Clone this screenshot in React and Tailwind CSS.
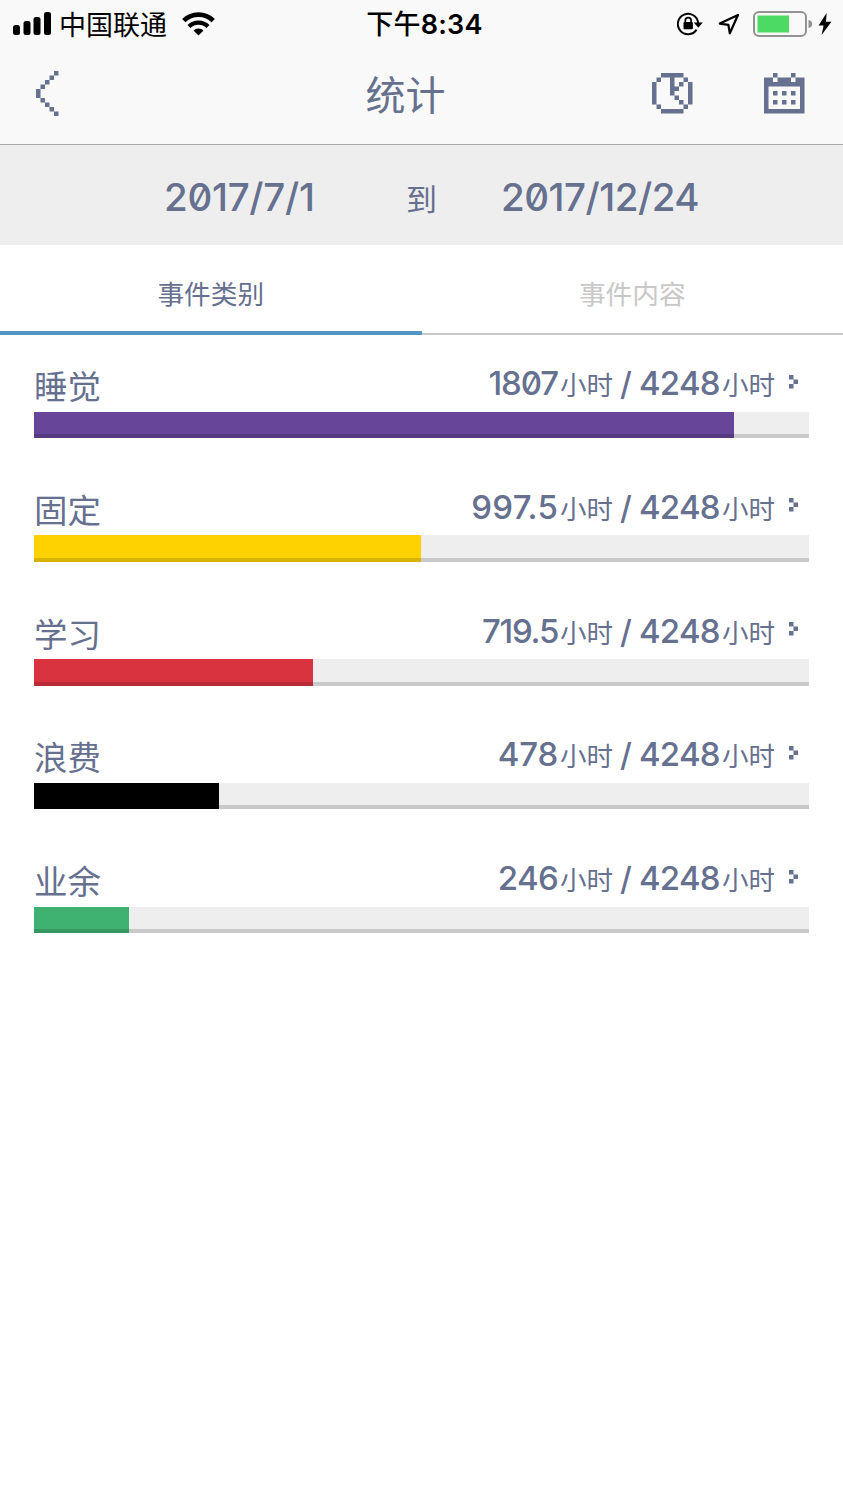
import React from "react";

const categories = [
  { name: "睡觉", hours: 1807, bar: "bg-[#674598] border-[#573b81]", tracking: "tracking-[-1.1px]" },
  { name: "固定", hours: 997.5, bar: "bg-[#fed100] border-[#d8b200]", tracking: "tracking-[0.2px]" },
  { name: "学习", hours: 719.5, bar: "bg-[#da3340] border-[#b92b36]", tracking: "tracking-[-1.3px]" },
  { name: "浪费", hours: 478, bar: "bg-black border-black", tracking: "tracking-[-0.2px]" },
  { name: "业余", hours: 246, bar: "bg-[#3fb271] border-[#369760]", tracking: "tracking-[-0.7px]" },
];

const totalHours = 4248;
const barMax = 2000;

// Pixel icons, one "#" per 4.5px cell
const backIcon = [
  "....#",
  "...#.",
  "..#..",
  ".#...",
  "#....",
  "#....",
  ".#...",
  "..#..",
  "...#.",
  "....#",
];

const clockIcon = [
  "..#####..",
  ".#..#..#.",
  "#...#.#.#",
  "#...##..#",
  "#...#...#",
  "#....#..#",
  "#.....#.#",
  ".#.....#.",
  "..#####..",
];

const calendarIcon = [
  "..#...#..",
  "##.###.##",
  "#########",
  "#.......#",
  "#.#.#.#.#",
  "#.......#",
  "#.#.#.#.#",
  "#.......#",
  "#########",
];

const arrowIcon = ["#.", ".#", "#."];

const PixelIcon = ({ rows, className }) => {
  const d = rows
    .map((row, y) =>
      [...row].map((cell, x) => (cell === "#" ? `M${x} ${y}h1v1h-1z` : "")).join("")
    )
    .join("");
  return (
    <svg
      className={className}
      width={rows[0].length * 4.5}
      height={rows.length * 4.5}
      viewBox={`0 0 ${rows[0].length} ${rows.length}`}
      fill="currentColor"
      overflow="visible"
    >
      <path d={d} />
    </svg>
  );
};

const StatusBar = () => (
  <div className="grid grid-cols-[1fr_auto_1fr] items-center h-[46px] pl-[13px] pr-[11px] text-black">
    <div className="flex items-center">
      <svg width="38" height="24" viewBox="0 0 38 24" fill="currentColor">
        <rect x="0" y="13" width="7" height="10" rx="2.5" />
        <rect x="10.5" y="9" width="7" height="14" rx="2.5" />
        <rect x="20.5" y="5" width="7" height="18" rx="2.5" />
        <rect x="31" y="0" width="7" height="23" rx="2.5" />
      </svg>
      <span className="ml-2 text-[27px] leading-[46px]">中国联通</span>
      <svg className="ml-[15px]" width="33" height="24" viewBox="0 0 33 24" fill="none" stroke="currentColor" strokeWidth="4.8">
        <path d="M1.8 8.6a21 21 0 0 1 29.4 0" />
        <path d="M7 14.6a13.5 13.5 0 0 1 19 0" strokeWidth="4.2" />
        <path d="M16.5 23.4l-5-5a7.2 7.2 0 0 1 10 0z" fill="currentColor" stroke="none" />
      </svg>
    </div>
    <div className="pt-0.5 pl-1 text-[27px] leading-[46px] font-['Inter','Noto_Sans_CJK_SC',sans-serif] font-semibold tracking-[0.2px]">
      <span className="font-medium">下午</span>8:34
    </div>
    <div className="flex items-center justify-end">
      <svg width="26" height="24" viewBox="0 0 26 24" fill="none" stroke="currentColor" strokeWidth="2">
        <path d="M19.6 17.6a10.2 10.2 0 1 1 1.6-6.6" />
        <path d="M16.8 10.5h9l-4.5 5.2z" fill="currentColor" stroke="none" />
        <rect x="6.5" y="10" width="9.4" height="7.3" rx="1" fill="currentColor" stroke="none" />
        <path d="M8.3 10.5V8.6a2.9 2.9 0 0 1 5.8 0v1.9" strokeWidth="1.7" />
      </svg>
      <svg className="ml-[15px]" width="22" height="22" viewBox="0 0 22 22" fill="none" stroke="currentColor" strokeWidth="2.2" strokeLinejoin="round">
        <path d="M20 2L1.8 10.6l8.6 1.2 1.4 8.4z" />
      </svg>
      <svg className="ml-[13px]" width="60" height="26" viewBox="0 0 60 26">
        <rect x="1" y="1" width="52" height="24" rx="5" fill="none" stroke="#929292" strokeWidth="2" />
        <rect x="4.5" y="4.5" width="31.5" height="17" fill="#4cd964" />
        <path d="M55.5 9c5 1 5 7 0 8z" fill="#929292" />
      </svg>
      <svg className="ml-[5px]" width="14" height="22" viewBox="0 0 14 22" fill="currentColor">
        <path d="M8.6 0L0.6 12.6h5L3.6 22 13.4 8.8H8z" />
      </svg>
    </div>
  </div>
);

const Header = () => (
  <div className="grid grid-cols-[1fr_auto_1fr] items-start h-[98px] pl-[35.5px] pr-[38.5px]">
    <PixelIcon rows={backIcon} className="mt-[25px]" />
    <h1 className="pr-[29px] text-[40px] leading-[95px]">统计</h1>
    <div className="flex justify-end gap-[71.5px] pt-[27px]">
      <PixelIcon rows={clockIcon} />
      <PixelIcon rows={calendarIcon} />
    </div>
  </div>
);

const Digits = ({ children, className }) => (
  <span
    className={`font-['Inter','Noto_Sans_CJK_SC',sans-serif] font-medium [font-feature-settings:'zero'] ${className}`}
  >
    {children}
  </span>
);

const DateRange = () => (
  <div className="flex h-[100px] bg-[#eee] text-[38.5px] leading-[104px]">
    <Digits className="ml-[164px] w-[242px] tracking-[-0.3px]">2017/7/1</Digits>
    <span className="w-[95px] text-[31px] leading-[105px]">到</span>
    <Digits className="tracking-[-0.5px]">2017/12/24</Digits>
  </div>
);

const Tabs = () => (
  <div className="flex h-[90px] text-[26.7px] leading-[95px] text-center">
    <div className="w-1/2 border-b-4 border-[#5396c3]">事件类别</div>
    <div className="w-1/2 border-b-2 border-[#c8c8c8] text-[#c8c8c8]">事件内容</div>
  </div>
);

const CategoryRow = ({ name, hours, bar, tracking }) => (
  <div className="h-[123.75px]">
    <div className="flex items-start h-[76.5px] pr-[11px]">
      <span className="flex-1 text-[33.5px] leading-[100px]">{name}</span>
      <Digits className={`text-[33px] leading-[97px] ${tracking}`}>{hours}</Digits>
      <span className="w-[59px] ml-[2px] text-[26.5px] leading-[98px]">小时</span>
      <Digits className="w-[20px] pl-[1px] text-[32px] leading-[97px]">/</Digits>
      <Digits className="w-[83px] text-[33px] leading-[97px] tracking-[-0.8px]">{totalHours}</Digits>
      <span className="w-[67px] text-[26.5px] leading-[98px]">小时</span>
      <PixelIcon rows={arrowIcon} className="mt-[39.5px]" />
    </div>
    <div className="h-[26.5px] bg-[#eee] border-b-4 border-[#c9c9c9]">
      <div
        className={`h-[26.5px] border-b-4 ${bar}`}
        style={{ width: `${(hours / barMax) * 100}%` }}
      />
    </div>
  </div>
);

const App = () => {
  return (
    <div className="w-[843px] h-[1500px] overflow-hidden bg-white text-[#66708f] font-['Noto_Sans_CJK_SC',sans-serif]">
      <div className="h-[145px] bg-[#f9f9f9] border-b border-[#a9a9a9]">
        <StatusBar />
        <Header />
      </div>
      <DateRange />
      <Tabs />
      <div className="px-[34px]">
        {categories.map((category) => (
          <CategoryRow key={category.name} {...category} />
        ))}
      </div>
    </div>
  );
};

export default App;
